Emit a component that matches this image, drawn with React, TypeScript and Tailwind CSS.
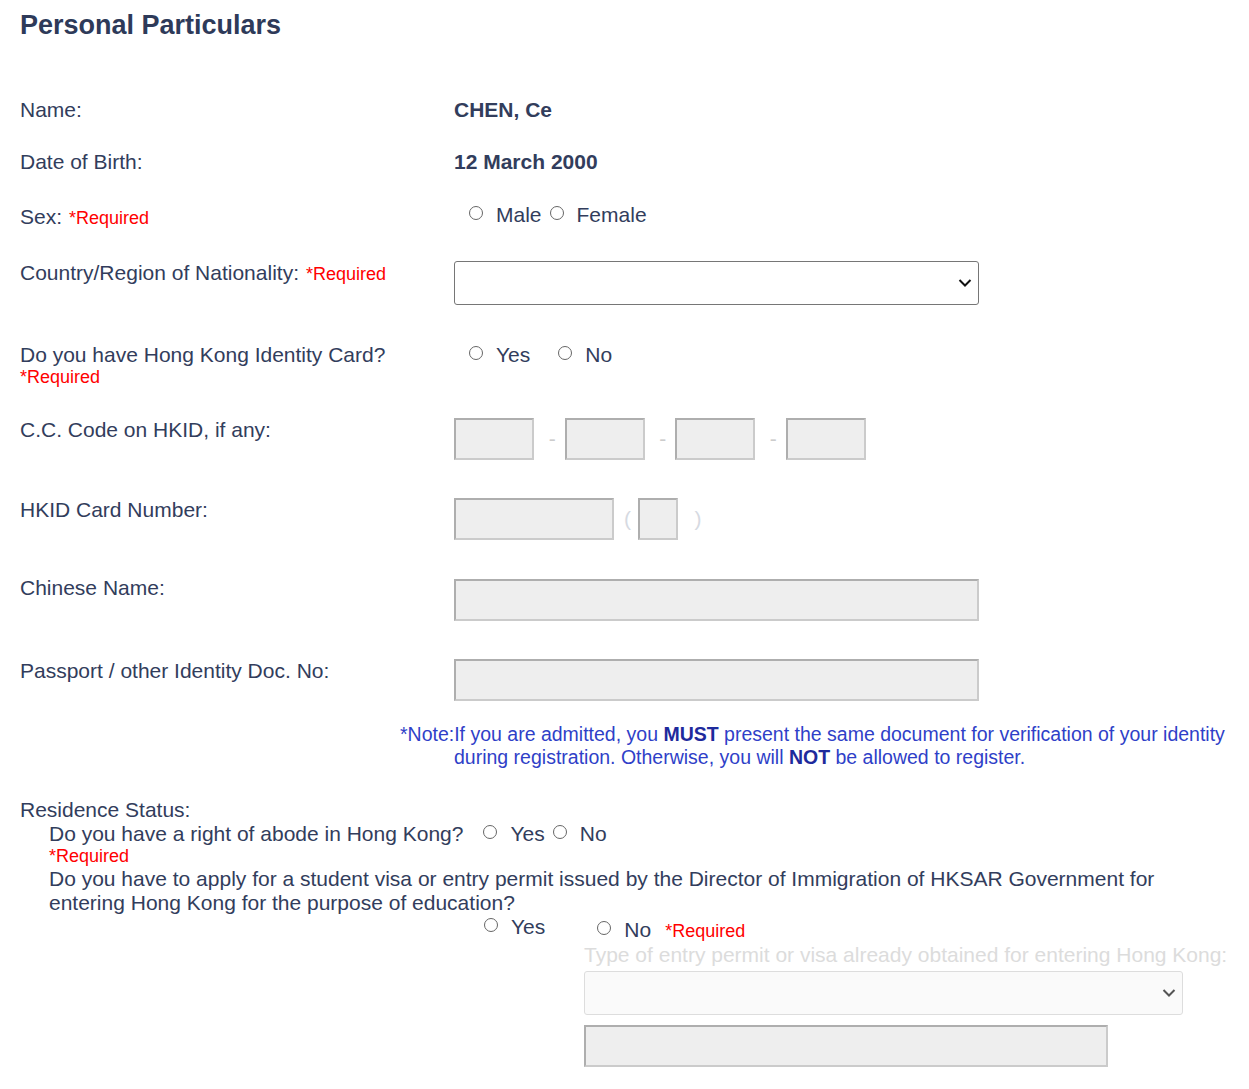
import React from 'react'

const font = "font-['Liberation_Sans',Arial,sans-serif]"

function Radio({ label, className = '' }: { label: string; className?: string }) {
  return (
    <label className={`inline-flex items-center ${className}`}>
      <span className="mb-[4px] mr-[13px] h-[14px] w-[14px] shrink-0 rounded-full border border-[#666666] bg-white" />
      <span>{label}</span>
    </label>
  )
}

function Required({ className = '' }: { className?: string }) {
  return <span className={`text-[18px] leading-[20px] text-[#ff0000] ${className}`}>*Required</span>
}

function Disabled({ w, className = '' }: { w: string; className?: string }) {
  return (
    <input
      disabled
      className={`h-[42px] ${w} border-2 border-t-[#aeaeae] border-l-[#aeaeae] border-b-[#cbcbcb] border-r-[#cbcbcb] bg-[#eeeeee] ${className}`}
    />
  )
}

function Chevron({ color }: { color: string }) {
  return (
    <svg width="14" height="9" viewBox="0 0 14 9" className="pointer-events-none absolute right-[7px] top-1/2 -translate-y-1/2">
      <path d="M1.5 1.5 L7 7 L12.5 1.5" fill="none" stroke={color} strokeWidth="2" />
    </svg>
  )
}

function Row({ h, label, children }: { h: string; label: React.ReactNode; children?: React.ReactNode }) {
  return (
    <div className={`grid grid-cols-[434px_1fr] ${h}`}>
      <div>{label}</div>
      <div>{children}</div>
    </div>
  )
}

export default function App() {
  return (
    <div className={`${font} min-h-[1089px] bg-white px-[20px] text-[21px] leading-[24px] text-[#323d5c]`}>
      <div className="h-[98px] pt-[9px]">
        <h1 className="text-[27px] font-bold leading-[32px] text-[#2e3a59]">Personal Particulars</h1>
      </div>

      <Row h="h-[52px]" label="Name:">
        <span className="font-bold">CHEN, Ce</span>
      </Row>
      <Row h="h-[55px]" label="Date of Birth:">
        <span className="font-bold">12 March 2000</span>
      </Row>
      <Row
        h="h-[56px]"
        label={
          <span className="flex items-baseline gap-[7px]">
            Sex: <Required />
          </span>
        }
      >
        <div className="-mt-[2px] flex h-[24px] items-center pl-[15px]">
          <Radio label="Male" />
          <Radio label="Female" className="ml-[8px]" />
        </div>
      </Row>
      <Row
        h="h-[82px]"
        label={
          <span className="flex items-baseline gap-[7px]">
            Country/Region of Nationality: <Required />
          </span>
        }
      >
        <div className="relative h-[44px] w-[525px]">
          <select className="h-full w-full appearance-none rounded-[3px] border border-[#767676] bg-white" />
          <Chevron color="#111111" />
        </div>
      </Row>
      <Row
        h="h-[75px]"
        label={
          <div>
            <div>Do you have Hong Kong Identity Card?</div>
            <Required className="block" />
          </div>
        }
      >
        <div className="flex h-[24px] items-center pl-[15px]">
          <Radio label="Yes" />
          <Radio label="No" className="ml-[28px]" />
        </div>
      </Row>
      <Row h="h-[80px]" label="C.C. Code on HKID, if any:">
        <div className="flex items-center">
          <Disabled w="w-[80px]" />
          <span className="w-[30.5px] pl-[6px] text-center text-[#cccccc]">-</span>
          <Disabled w="w-[80px]" />
          <span className="w-[30.5px] pl-[6px] text-center text-[#cccccc]">-</span>
          <Disabled w="w-[80px]" />
          <span className="w-[30.5px] pl-[6px] text-center text-[#cccccc]">-</span>
          <Disabled w="w-[80px]" />
        </div>
      </Row>
      <Row h="h-[78px]" label="HKID Card Number:">
        <div className="flex items-center">
          <Disabled w="w-[160px]" />
          <span className="w-[24px] pl-[3px] text-center text-[#d6dae2]">(</span>
          <Disabled w="w-[40px]" />
          <span className="w-[24px] pl-[16px] text-center text-[#d6dae2]">)</span>
        </div>
      </Row>
      <Row h="h-[83px]" label="Chinese Name:">
        <Disabled w="w-[525px]" className="mt-[3px]" />
      </Row>
      <Row h="h-[64px]" label="Passport / other Identity Doc. No:">
        <Disabled w="w-[525px]" />
      </Row>

      <p className="ml-[380px] pl-[54px] indent-[-54px] text-[19.5px] leading-[23px] text-[#2f3fc8]">
        *Note:If you are admitted, you <b className="text-[#1e2a9c]">MUST</b> present the same document for verification of your identity during registration. Otherwise, you will <b className="text-[#1e2a9c]">NOT</b> be allowed to register.
      </p>

      <div className="mt-[29px]">
        <div>Residence Status:</div>
        <div className="pl-[29px]">
          <div className="flex h-[24px] items-center">
            <span>Do you have a right of abode in Hong Kong?</span>
            <Radio label="Yes" className="ml-[20px]" />
            <Radio label="No" className="ml-[8px]" />
          </div>
          <Required className="block leading-[21px]" />
          <div>
            Do you have to apply for a student visa or entry permit issued by the Director of Immigration of HKSAR Government for entering Hong Kong for the purpose of education?
          </div>
          <div className="flex h-[24px] items-center pl-[435px]">
            <Radio label="Yes" />
            <Radio label="No" className="ml-[52px] translate-y-[3px]" />
            <Required className="ml-[14px] translate-y-[4px]" />
          </div>
          <div className="pl-[535px]">
            <div className="mt-[4px] text-[#dcdcdc]">
              Type of entry permit or visa already obtained for entering Hong Kong:
            </div>
            <div className="relative mt-[4px] h-[44px] w-[599px]">
              <select disabled className="h-full w-full appearance-none rounded-[3px] border border-[#dddddd] bg-[#fafafa]" />
              <Chevron color="#555555" />
            </div>
            <Disabled w="w-[524px]" className="mt-[10px]" />
          </div>
        </div>
      </div>
    </div>
  )
}
